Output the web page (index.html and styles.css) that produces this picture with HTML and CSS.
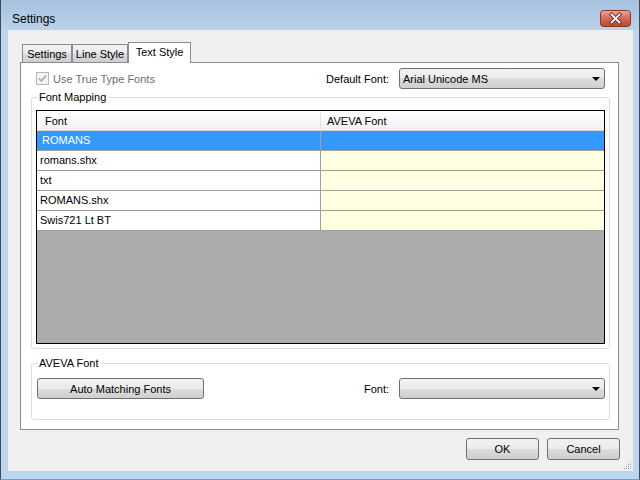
FILE: index.html
```html
<!DOCTYPE html>
<html>
<head>
  <title>Settings</title>
  <link rel="stylesheet" href="styles.css">
</head>
<body>
  <div class="window">
    <div class="titlebar">
      <span class="title">Settings</span>
      <span class="close">
        <svg width="31" height="17" viewBox="0 0 31 17">
          <defs>
            <linearGradient id="cg" x1="0" y1="0" x2="0" y2="1">
              <stop offset="0" stop-color="#e9a99a"/>
              <stop offset="0.5" stop-color="#d26a55"/>
              <stop offset="1" stop-color="#c0442c"/>
            </linearGradient>
          </defs>
          <rect x="0.5" y="0.5" width="30" height="16" rx="3" fill="url(#cg)" stroke="#8b3426"/>
          <path d="M11.5 4.5 L19.5 12.5 M19.5 4.5 L11.5 12.5" stroke="#5b2a24" stroke-width="3.6" stroke-linecap="square"/>
          <path d="M11.5 4.5 L19.5 12.5 M19.5 4.5 L11.5 12.5" stroke="#ffffff" stroke-width="1.8" stroke-linecap="square"/>
        </svg>
      </span>
    </div>

    <div class="client">
      <div class="tabs">
        <div class="tab tab-settings">Settings</div>
        <div class="tab tab-line">Line Style</div>
        <div class="tab tab-text active">Text Style</div>
      </div>

      <div class="tabpage">
        <div class="top-row">
          <label class="check disabled">
            <svg width="13" height="13" viewBox="0 0 13 13">
              <rect x="0.5" y="0.5" width="12" height="12" fill="#f4f4f4" stroke="#b8b8b8"/>
              <path d="M3 6.5 L5.3 9 L10 3.5" fill="none" stroke="#a8a8a8" stroke-width="1.6"/>
            </svg>
            Use True Type Fonts
          </label>
          <div class="field-pair">
            <span>Default Font:</span>
            <div class="combo">Arial Unicode MS<span class="arrow"></span></div>
          </div>
        </div>

        <fieldset class="group mapping">
          <legend>Font Mapping</legend>
          <div class="grid">
            <div class="grid-head">
              <div class="hcell first">Font</div>
              <div class="hcell">AVEVA Font</div>
            </div>
            <div class="grid-row selected">
              <div class="cell font-cell">ROMANS</div>
              <div class="cell aveva-cell"></div>
            </div>
            <div class="grid-row">
              <div class="cell font-cell">romans.shx</div>
              <div class="cell aveva-cell"></div>
            </div>
            <div class="grid-row">
              <div class="cell font-cell">txt</div>
              <div class="cell aveva-cell"></div>
            </div>
            <div class="grid-row">
              <div class="cell font-cell">ROMANS.shx</div>
              <div class="cell aveva-cell"></div>
            </div>
            <div class="grid-row">
              <div class="cell font-cell">Swis721 Lt BT</div>
              <div class="cell aveva-cell"></div>
            </div>
          </div>
        </fieldset>

        <fieldset class="group aveva">
          <legend>AVEVA Font</legend>
          <div class="aveva-row">
            <button class="btn auto-btn">Auto Matching Fonts</button>
            <div class="field-pair">
              <span>Font:</span>
              <div class="combo"><span class="arrow"></span></div>
            </div>
          </div>
        </fieldset>
      </div>

      <div class="dialog-buttons">
        <button class="btn dlg-btn">OK</button>
        <button class="btn dlg-btn">Cancel</button>
      </div>

      <span class="grip">
        <svg width="8" height="8" viewBox="0 0 8 8">
          <rect x="6" y="0" width="1" height="1" fill="#9a9a9a"/>
          <rect x="4" y="2" width="1" height="1" fill="#9a9a9a"/>
          <rect x="6" y="2" width="1" height="1" fill="#9a9a9a"/>
          <rect x="2" y="4" width="1" height="1" fill="#9a9a9a"/>
          <rect x="4" y="4" width="1" height="1" fill="#9a9a9a"/>
          <rect x="6" y="4" width="1" height="1" fill="#9a9a9a"/>
          <rect x="0" y="6" width="1" height="1" fill="#9a9a9a"/>
          <rect x="2" y="6" width="1" height="1" fill="#9a9a9a"/>
          <rect x="4" y="6" width="1" height="1" fill="#9a9a9a"/>
          <rect x="6" y="6" width="1" height="1" fill="#9a9a9a"/>
        </svg>
      </span>
    </div>
  </div>
</body>
</html>
```

FILE: styles.css
```css
* {
  box-sizing: border-box;
}

body {
  margin: 0;
  font-family: "Liberation Sans", Arial, sans-serif;
  font-size: 11px;
  color: #000;
}

.window {
  width: 640px;
  height: 480px;
  display: flex;
  flex-direction: column;
  background: #bfd5ed;
  border: 1px solid #3d4a5a;
  border-top: 0;
  border-bottom-color: #2bbfd6;
}

.titlebar {
  height: 30px;
  flex: none;
  display: flex;
  align-items: flex-start;
  justify-content: space-between;
  padding: 10px 8px 0 11px;
  background: linear-gradient(#a6c1df, #bcd2ea);
}

.title {
  font-size: 12px;
  line-height: 15px;
  margin-top: 2px;
  color: #000;
}

.close {
  display: block;
  height: 17px;
  line-height: 0;
}

.client {
  position: relative;
  flex: 1;
  margin: 0 6px 8px 7px;
  padding: 12px 14px 0 12px;
  background: #f0f0f0;
  display: flex;
  flex-direction: column;
}

/* tabs */
.tabs {
  display: flex;
  align-items: flex-end;
  height: 21px;
  margin-bottom: -1px;
  padding-left: 2px;
}

.tab {
  height: 18px;
  margin-bottom: 1px;
  border: 1px solid #898c95;
  border-bottom: 0;
  background: linear-gradient(#f2f2f2, #ebebeb 50%, #dddddd 50%, #cfcfcf);
  text-align: center;
  line-height: 18px;
}

.tab-settings { width: 50px; }
.tab-line { width: 56px; }

.tab.active {
  position: relative;
  z-index: 1;
  width: 63px;
  height: 21px;
  margin-bottom: 0;
  background: #fff;
  line-height: 19px;
}

.tabpage {
  height: 368px;
  background: #fff;
  border: 1px solid #898c95;
  padding: 5px 8px 0 10px;
}

.top-row {
  display: flex;
  align-items: center;
  height: 21px;
  margin: 0 5px 0 5px;
}

.check {
  display: flex;
  align-items: center;
  gap: 4px;
}

.check svg {
  display: block;
}

.check.disabled {
  color: #6d6d6d;
}

.field-pair {
  margin-left: auto;
  display: flex;
  align-items: center;
  gap: 10px;
}

.combo {
  width: 206px;
  height: 21px;
  display: flex;
  align-items: center;
  padding-left: 3px;
  border: 1px solid #707070;
  border-radius: 3px;
  background: linear-gradient(#f2f2f2, #ebebeb 50%, #dddddd 50%, #cfcfcf);
}

.arrow {
  margin-left: auto;
  margin-right: 4px;
  width: 0;
  height: 0;
  border-left: 4px solid transparent;
  border-right: 4px solid transparent;
  border-top: 4px solid #000;
}

/* group boxes */
.group {
  margin: 0;
  min-inline-size: 0;
  border: 1px solid #d5dfe5;
  border-radius: 3px;
}

.group legend {
  line-height: 13px;
  padding: 0 2px;
}

.mapping {
  margin-top: 2px;
  padding: 6px 4px 4px 4px;
}

.mapping legend {
  margin-left: 1px;
}

.aveva {
  margin-top: 8px;
  padding: 8px 4px 20px 5px;
}

/* grid */
.grid {
  height: 234px;
  border: 1px solid #000;
  background: #ababab;
}

.grid-head {
  display: flex;
  height: 20px;
  border-top: 1px solid #fff;
  border-bottom: 1px solid #d5d5d5;
  background: linear-gradient(#ffffff, #f7f8fa 50%, #f0f1f3);
}

.hcell {
  line-height: 18px;
  padding-left: 6px;
  flex: 1;
}

.hcell.first {
  flex: none;
  width: 284px;
  padding-left: 8px;
  border-right: 1px solid #e3e3e3;
}

.grid-row {
  display: flex;
  height: 20px;
  border-bottom: 1px solid #a0a0a0;
}

.cell {
  line-height: 19px;
  padding-left: 3px;
}

.font-cell {
  width: 284px;
  background: #fff;
  border-right: 1px solid #a0a0a0;
}

.aveva-cell {
  flex: 1;
  background: #ffffe1;
}

.grid-row.selected .cell {
  background: #3399ff;
  color: #fff;
}

.grid-row.selected .font-cell {
  padding-left: 5px;
}

.aveva-row {
  display: flex;
  align-items: center;
  height: 21px;
}

/* buttons */
.btn {
  font-family: "Liberation Sans", Arial, sans-serif;
  font-size: 11px;
  color: #000;
  border: 1px solid #707070;
  border-radius: 3px;
  background: linear-gradient(#f2f2f2, #ebebeb 50%, #dddddd 50%, #cfcfcf);
  padding: 0;
}

.auto-btn {
  width: 167px;
  height: 21px;
}

.dialog-buttons {
  display: flex;
  justify-content: flex-end;
  gap: 8px;
  margin-top: 8px;
  margin-right: -1px;
}

.dlg-btn {
  width: 73px;
  height: 22px;
}

.grip {
  position: absolute;
  right: 1px;
  bottom: 1px;
  line-height: 0;
}
```
